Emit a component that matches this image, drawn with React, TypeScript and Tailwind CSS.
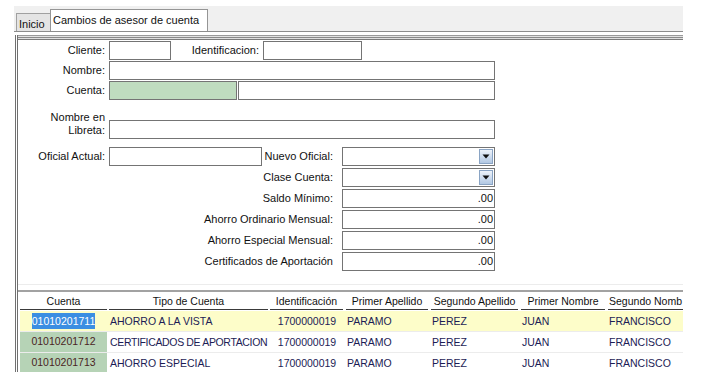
import React from "react";

const font = "font-['Liberation_Sans',Arial,sans-serif]";

function Input({ w, green, value, drop }: { w: number; green?: boolean; value?: string; drop?: boolean }) {
  return (
    <div
      className={`h-[19px] border border-[#747474] flex items-center justify-end ${green ? "bg-[#bfdcbf]" : "bg-white"}`}
      style={{ width: w }}
    >
      {value && <span className="pr-[1px] leading-none">{value}</span>}
      {drop && (
        <div className="mr-[1px] w-[14px] h-[15px] border border-[#8aa4c4] bg-gradient-to-b from-[#eef3fa] to-[#b2c8e3] flex items-center justify-center">
          <svg width="8" height="5" viewBox="0 0 8 5">
            <path d="M0.5 0.5 L7.5 0.5 L4 4.5 Z" fill="#111" />
          </svg>
        </div>
      )}
    </div>
  );
}

function Label({ w, children }: { w: number; children: React.ReactNode }) {
  return (
    <div className="text-right leading-[19px] whitespace-nowrap shrink-0" style={{ width: w }}>
      {children}
    </div>
  );
}

const cols: { w: number; g: number; title: string; align: string }[] = [
  { w: 87, g: 2, title: "Cuenta", align: "center" },
  { w: 159, g: 2, title: "Tipo de Cuenta", align: "left" },
  { w: 73, g: 3, title: "Identificación", align: "center" },
  { w: 82, g: 3, title: "Primer Apellido", align: "left" },
  { w: 87, g: 3, title: "Segundo Apellido", align: "left" },
  { w: 84, g: 3, title: "Primer Nombre", align: "left" },
  { w: 75, g: 0, title: "Segundo Nomb", align: "left" },
];

const rows = [
  ["01010201711", "AHORRO A LA VISTA", "1700000019", "PARAMO", "PEREZ", "JUAN", "FRANCISCO"],
  ["01010201712", "CERTIFICADOS DE APORTACION", "1700000019", "PARAMO", "PEREZ", "JUAN", "FRANCISCO"],
  ["01010201713", "AHORRO ESPECIAL", "1700000019", "PARAMO", "PEREZ", "JUAN", "FRANCISCO"],
];

export default function App() {
  return (
    <div className={`w-[721px] h-[381px] bg-white overflow-hidden text-[11px] text-[#111] ${font}`}>
      <div className="ml-[14px] pt-[6px] w-[669px]">
        {/* tab strip */}
        <div className="h-[25px] bg-[#f0f0f0] flex items-end pl-[2px]">
          <div className="w-[34px] h-[18px] bg-[#e4e4e4] border-l border-t border-[#a0a0a0] pl-[2px] leading-[20px] whitespace-nowrap">
            Inicio
          </div>
          <div className="w-[158px] h-[22px] bg-white border-l border-t border-r border-[#959595] pl-[2px] leading-[20px] whitespace-nowrap">
            Cambios de asesor de cuenta
          </div>
        </div>
        <div className="h-px bg-[#8c8c8c]" />
        <div className="h-[3px] bg-white" />
        {/* panel */}
        <div className="ml-[1px] border-l-[3px] border-double border-[#707070]">
          <div className="h-px bg-[#9a9a9a]" />
          <div className="h-px bg-[#e2e2e2]" />
          <div className="h-px bg-[#8a8a8a]" />
          <div className="h-px bg-[#dedede]" />
          <div className="h-px bg-[#7c7c7c]" />
          {/* form */}
          <div className="pt-[1px] h-[244px] flex flex-col">
            <div className="flex items-center">
              <Label w={87}>Cliente:</Label>
              <div className="ml-[4px]"><Input w={62} /></div>
              <Label w={88}>Identificacion:</Label>
              <div className="ml-[4px]"><Input w={99} /></div>
            </div>
            <div className="flex items-center mt-[1px]">
              <Label w={87}>Nombre:</Label>
              <div className="ml-[4px]"><Input w={386} /></div>
            </div>
            <div className="flex items-center mt-[1px]">
              <Label w={87}>Cuenta:</Label>
              <div className="ml-[4px]"><Input w={128} green /></div>
              <div className="ml-[1px]"><Input w={257} /></div>
            </div>
            <div className="flex items-start mt-[20px]">
              <div className="w-[87px] text-right leading-[13px] -mt-[9px]">
                Nombre en
                <br />
                Libreta:
              </div>
              <div className="ml-[4px]"><Input w={386} /></div>
            </div>
            <div className="flex items-center mt-[8px]">
              <Label w={87}>Oficial Actual:</Label>
              <div className="ml-[4px]"><Input w={153} /></div>
              <Label w={71}>Nuevo Oficial:</Label>
              <div className="ml-[9px]"><Input w={153} drop /></div>
            </div>
            {[
              ["Clase Cuenta:", ""],
              ["Saldo Mínimo:", ".00"],
              ["Ahorro Ordinario Mensual:", ".00"],
              ["Ahorro Especial Mensual:", ".00"],
              ["Certificados de Aportación", ".00"],
            ].map(([l, v], i) => (
              <div key={l} className="flex items-center mt-[2px]">
                <Label w={315}>{l}</Label>
                <div className="ml-[9px]">
                  <Input w={153} value={v || undefined} drop={i === 0} />
                </div>
              </div>
            ))}
          </div>
          <div className="h-px bg-[#ececec]" />
          <div className="h-[5px]" />
          {/* grid */}
          <div className="h-[2px] bg-[#a2a2a2]" />
          <div className="h-[80px] overflow-hidden pl-[2px] text-[10.5px]">
            <div className="flex h-[19px]">
              {cols.map((c) => (
                <div key={c.title} style={{ width: c.w + c.g, paddingRight: c.g }} className="shrink-0">
                  <div className="h-[18px] border-b border-[#3a3a3a] leading-[18px] text-center whitespace-nowrap overflow-hidden">
                    {c.title}
                  </div>
                </div>
              ))}
            </div>
            {rows.map((r, ri) => (
              <div
                key={ri}
                className={`flex h-[21px] border-b border-[#ececec] ${ri === 0 ? "bg-[#fdfdc9]" : "bg-white"}`}
              >
                {r.map((cell, ci) => {
                  const c = cols[ci];
                  if (ci === 0) {
                    return (
                      <div
                        key={ci}
                        style={{ width: c.w + c.g, paddingRight: c.g }}
                        className="shrink-0 h-full"
                      >
                        <div
                          className={`h-full flex items-center justify-center ${ri === 0 ? "" : "bg-[#b6d3b6] text-[#4a1f1f]"}`}
                        >
                          <span className={ri === 0 ? "bg-[#3b8ee2] text-white leading-[16px]" : ""}>{cell}</span>
                        </div>
                      </div>
                    );
                  }
                  return (
                    <div
                      key={ci}
                      style={{ width: c.w + c.g }}
                      className={`shrink-0 h-full leading-[21px] whitespace-nowrap overflow-hidden text-[#1c1c55] ${c.align === "center" ? "text-center pr-[2px]" : "text-left pl-[1px]"} ${cell.length > 20 ? "tracking-[-0.35px]" : ""}`}
                    >
                      {cell}
                    </div>
                  );
                })}
              </div>
            ))}
          </div>
        </div>
      </div>
    </div>
  );
}
